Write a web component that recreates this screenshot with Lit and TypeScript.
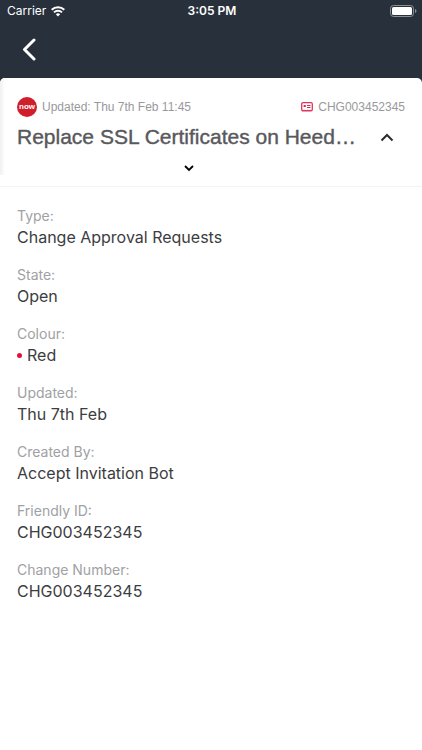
import { LitElement, html, css, nothing } from "lit";
import { customElement } from "lit/decorators.js";

interface Field {
  label: string;
  value: string;
  dot?: boolean;
}

const FIELDS: Field[] = [
  { label: "Type:", value: "Change Approval Requests" },
  { label: "State:", value: "Open" },
  { label: "Colour:", value: "Red", dot: true },
  { label: "Updated:", value: "Thu 7th Feb" },
  { label: "Created By:", value: "Accept Invitation Bot" },
  { label: "Friendly ID:", value: "CHG003452345" },
  { label: "Change Number:", value: "CHG003452345" },
];

@customElement("status-bar")
class StatusBar extends LitElement {
  static styles = css`
    :host {
      display: grid;
      grid-template-columns: 1fr auto 1fr;
      align-items: center;
      height: 22px;
      padding: 0 5px 0 7px;
      color: #fff;
      font-size: 12px;
      line-height: 22px;
    }
    .carrier {
      display: flex;
      align-items: center;
      gap: 5px;
    }
    .time {
      font-weight: 600;
    }
    .battery {
      justify-self: end;
    }
    svg {
      display: block;
    }
  `;

  render() {
    return html`
      <span class="carrier">
        Carrier
        <svg width="14" height="11" viewBox="0 0 14 11" fill="none" stroke="#fff" stroke-width="2">
          <path d="M0.7 3.8a9 9 0 0 1 12.6 0" />
          <path d="M3 6.4a5.7 5.7 0 0 1 8 0" />
          <path d="M4.8 8.2a3.2 3.2 0 0 1 4.4 0L7 10.4z" fill="#fff" stroke="none" />
        </svg>
      </span>
      <span class="time">3:05 PM</span>
      <svg class="battery" width="27" height="12" viewBox="0 0 27 12">
        <rect x="0.5" y="0.5" width="23" height="11" rx="3" fill="none" stroke="#8b9097" />
        <rect x="2" y="2" width="20" height="8" rx="1.5" fill="#fff" />
        <path d="M25 4v4q1.5-.5 1.5-2T25 4z" fill="#8b9097" />
      </svg>
    `;
  }
}

@customElement("ticket-header")
class TicketHeader extends LitElement {
  static styles = css`
    :host {
      display: block;
      box-sizing: border-box;
      padding: 18px 17px 12px;
      background: linear-gradient(to right, #f0f0f1, #fff) 0 0 / 5px 97px no-repeat #fff;
      border-radius: 5px 5px 0 0;
      border-bottom: 1px solid #f3f3f4;
      font-family: "Liberation Sans", Arial, sans-serif;
    }
    .meta {
      display: flex;
      align-items: center;
      height: 22px;
      color: #98999c;
      font-size: 12px;
    }
    .brand {
      margin-right: 5px;
    }
    .id {
      display: flex;
      align-items: center;
      gap: 5px;
      margin-left: auto;
    }
    .heading {
      display: flex;
      align-items: center;
      justify-content: space-between;
      height: 38px;
      padding-right: 11px;
    }
    h1 {
      margin: 0;
      min-width: 0;
      overflow: hidden;
      white-space: nowrap;
      color: #58595c;
      font-size: 21px;
      font-weight: 400;
      line-height: 28px;
      -webkit-text-stroke: 0.4px #58595c;
    }
    button {
      display: block;
      padding: 0;
      border: 0;
      background: none;
      cursor: pointer;
    }
    .expand {
      margin: 6px auto 0;
      padding: 2px 45px 2px 0;
    }
    svg {
      display: block;
    }
    .mark {
      font: 700 8px "Liberation Sans", Arial, sans-serif;
    }
  `;

  render() {
    return html`
      <div class="meta">
        <svg class="brand" width="20" height="20" viewBox="0 0 20 20">
          <circle cx="10" cy="10" r="10" fill="#cf1f2b" />
          <text class="mark" x="10" y="12" text-anchor="middle" fill="#fff">now</text>
        </svg>
        <span>Updated: Thu 7th Feb 11:45</span>
        <span class="id">
          <svg width="12" height="10" viewBox="0 0 12 10">
            <rect x="0.7" y="0.7" width="10.6" height="8.2" rx="1.3" fill="#fff" stroke="#e2335f" stroke-width="1.3" />
            <path d="M2.6 3h2.2v2H2.6zM6 3h3.5v1H6zM6 5h3.5v1H6z" fill="#dc2853" />
            <path d="M1 8.4h10" stroke="#e2335f" stroke-width="1" />
          </svg>
          CHG003452345
        </span>
      </div>
      <div class="heading">
        <h1>Replace SSL Certificates on Heed…</h1>
        <button aria-label="Collapse">
          <svg width="14" height="9" viewBox="0 0 14 9" fill="none" stroke="#2b2d31" stroke-width="2">
            <path d="M1.5 7.5L7 2l5.5 5.5" />
          </svg>
        </button>
      </div>
      <button class="expand" aria-label="Show more">
        <svg width="10" height="8" viewBox="0 0 10 8" fill="none" stroke="#000" stroke-width="1.8">
          <path d="M1 2l4 4 4-4" />
        </svg>
      </button>
    `;
  }
}

@customElement("field-list")
class FieldList extends LitElement {
  static styles = css`
    :host {
      display: block;
      padding: 20px 17px;
    }
    dl {
      display: flex;
      flex-direction: column;
      gap: 17px;
      margin: 0;
    }
    dt {
      color: #a0a1a4;
      font-size: 14px;
      line-height: 18px;
    }
    dd {
      display: flex;
      align-items: center;
      gap: 5px;
      margin: 0;
      color: #3c3d41;
      font-size: 16px;
      line-height: 24px;
    }
    .dot {
      width: 5px;
      height: 5px;
      border-radius: 50%;
      background: #e0123c;
    }
  `;

  render() {
    return html`
      <dl>
        ${FIELDS.map(
          (f) => html`
            <div>
              <dt>${f.label}</dt>
              <dd>${f.dot ? html`<span class="dot"></span>` : nothing}${f.value}</dd>
            </div>
          `
        )}
      </dl>
    `;
  }
}

@customElement("app-root")
class AppRoot extends LitElement {
  static styles = css`
    :host {
      display: block;
      min-height: 100vh;
      background: #fff;
      font-family: Inter, "Liberation Sans", sans-serif;
    }
    .top {
      background: #28303c;
    }
    nav {
      display: flex;
      align-items: center;
      height: 56px;
      padding: 0 22px;
    }
    .back {
      display: block;
      padding: 0;
      border: 0;
      background: none;
      cursor: pointer;
    }
    svg {
      display: block;
    }
  `;

  render() {
    return html`
      <header class="top">
        <status-bar></status-bar>
        <nav>
          <button class="back" aria-label="Back">
            <svg width="14" height="24" viewBox="0 0 14 24" fill="none" stroke="#fff" stroke-width="3" stroke-linecap="round" stroke-linejoin="round">
              <path d="M12 2L2.5 11.5l9.5 9.5" />
            </svg>
          </button>
        </nav>
        <ticket-header></ticket-header>
      </header>
      <field-list></field-list>
    `;
  }
}
